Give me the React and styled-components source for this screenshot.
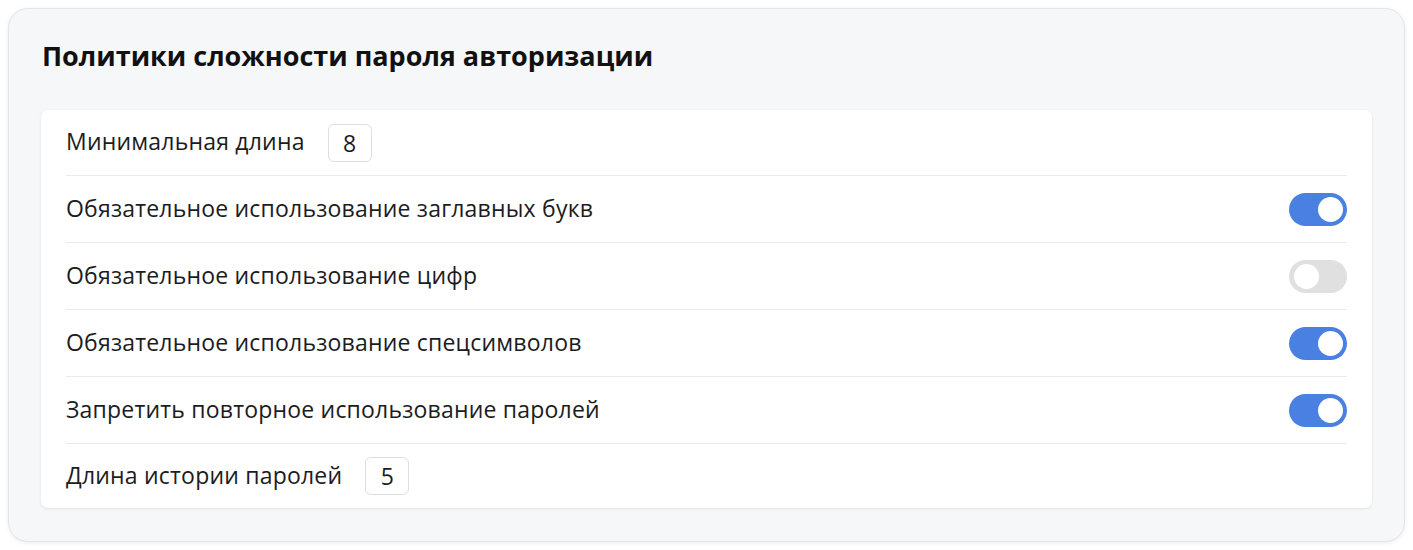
import React, { useState } from 'react';
import styled, { createGlobalStyle } from 'styled-components';

const GlobalStyle = createGlobalStyle`
  body {
    margin: 0;
    padding: 8px;
    background: #ffffff;
    font-family: "Open Sans", "Noto Sans", sans-serif;
    color: #1c1c1e;
  }
`;

const Panel = styled.section`
  box-sizing: border-box;
  width: 1397px;
  height: 534px;
  padding: 29px 32px 33px 32px;
  background: #f6f7f9;
  border: 1px solid #e4e5e8;
  border-radius: 20px;
  box-shadow: 0 1px 4px rgba(0, 0, 0, 0.08);
`;

const Title = styled.h2`
  margin: 0 0 36px 1px;
  height: 36px;
  font-size: 27px;
  line-height: 36px;
  font-weight: 700;
  color: #111;
`;

const Card = styled.div`
  background: #ffffff;
  border-radius: 7px;
  padding: 0 25px;
  box-shadow: 0 1px 3px rgba(0, 0, 0, 0.09);
`;

const Row = styled.div`
  display: flex;
  align-items: center;
  height: 66px;
  gap: 23px;
  & + & {
    border-top: 1px solid #ebebeb;
  }
  &:first-child {
    height: 65px;
  }
  &:last-child {
    height: 64px;
  }
`;

const Label = styled.span`
  font-size: 23px;
  letter-spacing: 0.2px;
  margin-top: -3px;
  color: #1c1c1e;
  flex: ${p => (p.$grow ? 1 : 'none')};
`;

const NumberBox = styled.div`
  box-sizing: border-box;
  width: 44px;
  height: 38px;
  display: flex;
  align-items: center;
  justify-content: center;
  border: 1px solid #dedede;
  border-radius: 6px;
  font-size: 23px;
`;

const Switch = styled.button`
  position: relative;
  width: 58px;
  height: 33px;
  padding: 0;
  border: none;
  border-radius: 17px;
  cursor: pointer;
  background: ${p => (p.$on ? '#4a80e1' : '#e0e0e0')};
  &::after {
    content: '';
    position: absolute;
    top: 4px;
    left: ${p => (p.$on ? '29px' : '5px')};
    width: 25px;
    height: 25px;
    border-radius: 50%;
    background: #ffffff;
  }
`;

const ToggleRow = ({ label, initial }) => {
  const [on, setOn] = useState(initial);
  return (
    <Row>
      <Label $grow>{label}</Label>
      <Switch $on={on} onClick={() => setOn(!on)} aria-label={label} />
    </Row>
  );
};

export default function App() {
  return (
    <>
      <GlobalStyle />
      <Panel>
        <Title>Политики сложности пароля авторизации</Title>
        <Card>
          <Row>
            <Label>Минимальная длина</Label>
            <NumberBox>8</NumberBox>
          </Row>
          <ToggleRow label="Обязательное использование заглавных букв" initial={true} />
          <ToggleRow label="Обязательное использование цифр" initial={false} />
          <ToggleRow label="Обязательное использование спецсимволов" initial={true} />
          <ToggleRow label="Запретить повторное использование паролей" initial={true} />
          <Row>
            <Label>Длина истории паролей</Label>
            <NumberBox>5</NumberBox>
          </Row>
        </Card>
      </Panel>
    </>
  );
}
